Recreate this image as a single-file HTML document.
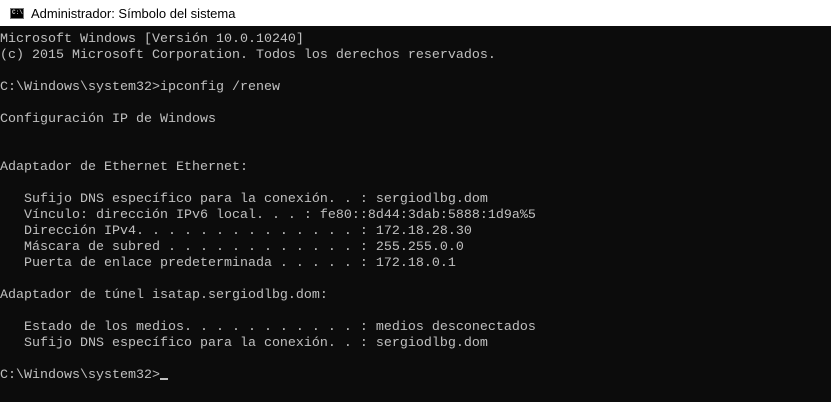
<!DOCTYPE html>
<html><head><meta charset="utf-8"><style>
html,body{margin:0;padding:0;width:831px;height:402px;overflow:hidden;background:#0c0c0c;}
.t{height:26px;background:#fff;position:relative;}
.t span{position:absolute;left:31px;top:6px;font:13px "Liberation Sans",sans-serif;color:#000;}
.ic{position:absolute;left:10px;top:8px;width:12px;height:9px;background:#000;border:1px solid #777;}
.ic i{position:absolute;left:1px;top:1px;font:bold 6px "Liberation Mono",monospace;color:#ccc;font-style:normal;line-height:6px;}
pre{margin:0;padding:6px 0 0 0;font:13.33px/16px "Liberation Mono",monospace;color:#c0c0c0;}
.cur{display:inline-block;width:8px;height:2px;background:#c0c0c0;vertical-align:-2px;}
</style></head><body>
<div class="t"><div class="ic"><i>C:\</i></div><span>Administrador: Símbolo del sistema</span></div>
<pre>Microsoft Windows [Versión 10.0.10240]
(c) 2015 Microsoft Corporation. Todos los derechos reservados.

C:\Windows\system32&gt;ipconfig /renew

Configuración IP de Windows


Adaptador de Ethernet Ethernet:

   Sufijo DNS específico para la conexión. . : sergiodlbg.dom
   Vínculo: dirección IPv6 local. . . : fe80::8d44:3dab:5888:1d9a%5
   Dirección IPv4. . . . . . . . . . . . . . : 172.18.28.30
   Máscara de subred . . . . . . . . . . . . : 255.255.0.0
   Puerta de enlace predeterminada . . . . . : 172.18.0.1

Adaptador de túnel isatap.sergiodlbg.dom:

   Estado de los medios. . . . . . . . . . . : medios desconectados
   Sufijo DNS específico para la conexión. . : sergiodlbg.dom

C:\Windows\system32&gt;<span class="cur"></span></pre>
</body></html>
